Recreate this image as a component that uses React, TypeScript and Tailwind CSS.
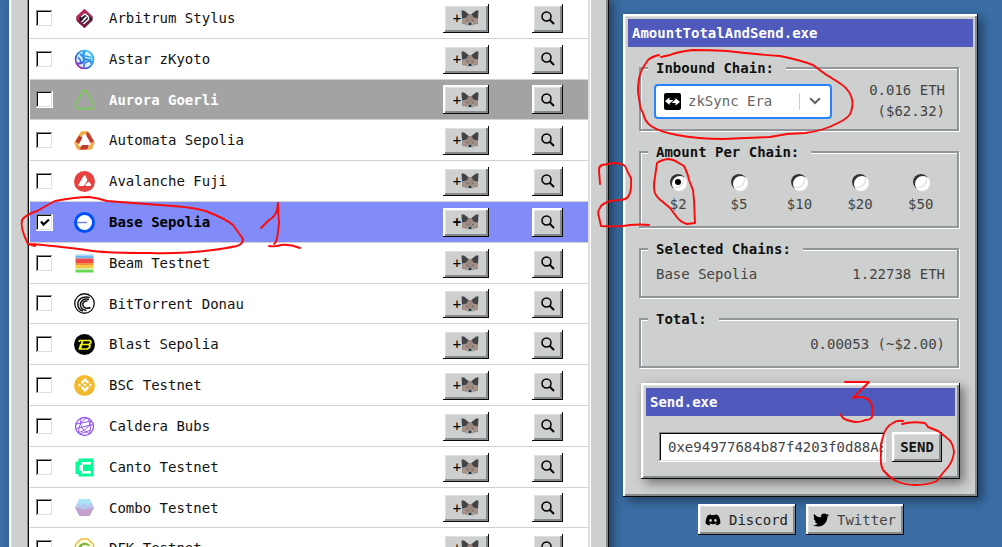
import { FC, ReactNode, useState } from "react";
import { FaDiscord, FaTwitter } from "react-icons/fa";
import { SiBinance } from "react-icons/si";

interface Chain {
  id: string;
  name: string;
  icon: ReactNode;
  hovered?: boolean;
}

const ChainIcon: FC<{ children: ReactNode }> = ({ children }) => (
  <svg viewBox="0 0 42 42" className="block size-[21px]" aria-hidden="true">
    {children}
  </svg>
);

const chains: Chain[] = [
  {
    id: "arbitrum-stylus",
    name: "Arbitrum Stylus",
    icon: (
      <ChainIcon>
        <path d="M21 2 37 17v8L21 40 5 25v-8z" fill="#2b1a30" />
        <path d="M21 2 37 17v4L22 9 11 18v9l-6-3v-7z" fill="#c2255a" />
        <path d="M21 40 6 27l5-2 10 8 13-11v5z" fill="#7d1b42" />
        <path d="M14 18 22 12l5 4-8 7M19 32l10-9v-6M15 28l9-8" fill="none" stroke="#fff" strokeWidth="3" />
      </ChainIcon>
    ),
  },
  {
    id: "astar-zkyoto",
    name: "Astar zKyoto",
    icon: (
      <ChainIcon>
        <defs>
          <linearGradient id="astar" gradientUnits="userSpaceOnUse" x1="6" y1="38" x2="36" y2="6">
            <stop offset="0" stopColor="#d6118f" />
            <stop offset="0.35" stopColor="#2f6fe0" />
            <stop offset="1" stopColor="#1fc3f5" />
          </linearGradient>
        </defs>
        <circle cx="21" cy="21" r="18" fill="#d9efff" stroke="url(#astar)" strokeWidth="3.4" />
        <g fill="none" stroke="url(#astar)" strokeWidth="4.6">
          <path d="M22 4c-5 6-5 11-1 17M21 21c5-1 11 1 15 8M21 21c-2 6-8 9-15 8" />
          <path d="M12 9c2 5 6 6 9 5 5-1 8 2 14 3M8 17c4 2 6 7 5 13M35 20c-5 3-7 6-12 7-3 2-4 5-3 11" strokeWidth="3" />
        </g>
      </ChainIcon>
    ),
  },
  {
    id: "aurora-goerli",
    name: "Aurora Goerli",
    hovered: true,
    icon: (
      <ChainIcon>
        <path
          d="M17 5q4-4 8 0l14 27q2 6-4 7H7q-6-1-4-7z"
          fill="none"
          stroke="#70d44b"
          strokeWidth="3"
          strokeLinejoin="round"
        />
      </ChainIcon>
    ),
  },
  {
    id: "automata-sepolia",
    name: "Automata Sepolia",
    icon: (
      <ChainIcon>
        <path
          d="M16 5h11l12 21-5 11H8L3 26z"
          fill="none"
          stroke="#f2ac45"
          strokeWidth="7"
          strokeLinejoin="round"
          transform="translate(1 1) scale(0.95)"
        />
        <path d="m10 11-7 12 7 5 7-13zM25 4l5 2 10 17-7 3-8-14zM16 30h14l-4 9H11z" fill="#c23b30" />
        <path d="M21 13 31 30H11z" fill="#fff" />
      </ChainIcon>
    ),
  },
  {
    id: "avalanche-fuji",
    name: "Avalanche Fuji",
    icon: (
      <ChainIcon>
        <circle cx="21" cy="21" r="21" fill="#e84142" />
        <path
          d="M19 10q2-3 4 0l3 6q1 2 0 4l-5 8q-1 2-3 2h-7q-3 0-2-3zM27 23q2-3 4 0l3 4q1 3-2 3h-7q-3 0-2-3z"
          fill="#fff"
        />
      </ChainIcon>
    ),
  },
  {
    id: "base-sepolia",
    name: "Base Sepolia",
    icon: (
      <ChainIcon>
        <circle cx="21" cy="21" r="18" fill="#fff" stroke="#0052ff" strokeWidth="6" />
        <path d="M6 21h20" stroke="#7c86ea" strokeWidth="3" />
      </ChainIcon>
    ),
  },
  {
    id: "beam-testnet",
    name: "Beam Testnet",
    icon: (
      <ChainIcon>
        <path d="M3 2h36v3H3z" fill="#c9e7fb" />
        <path d="M3 5h36v6H3z" fill="#72b7ee" />
        <path d="M3 11h36v9H3z" fill="#ef4a4a" />
        <path d="M3 20h36v4H3z" fill="#f6923c" />
        <path d="M3 24h36v7H3z" fill="#f8c945" />
        <path d="M3 31h36v3H3z" fill="#c3efaf" />
        <path d="M3 34h36v5H3z" fill="#6bd654" />
      </ChainIcon>
    ),
  },
  {
    id: "bittorrent-donau",
    name: "BitTorrent Donau",
    icon: (
      <ChainIcon>
        <circle cx="21" cy="21" r="19.5" fill="#fff" stroke="#111" strokeWidth="2.6" />
        <g fill="none" stroke="#111" strokeWidth="3">
          <path d="M31 9C16 5 6 14 8 25c1 6 5 10 10 11" />
          <path d="M30 13c-9-3-18 2-17 12 1 6 6 9 12 10" />
          <path d="M27 16c-6-1-11 3-9 9 2 6 9 7 15 4" />
        </g>
      </ChainIcon>
    ),
  },
  {
    id: "blast-sepolia",
    name: "Blast Sepolia",
    icon: (
      <ChainIcon>
        <circle cx="21" cy="21" r="21" fill="#050505" />
        <path
          d="M9 15l3-2h20l2 3-1 3-4 2 3 2-1 4-4 3H11l3-10M14 21h14M17 14l-4 15"
          fill="none"
          stroke="#f1f51b"
          strokeWidth="3.4"
        />
      </ChainIcon>
    ),
  },
  {
    id: "bsc-testnet",
    name: "BSC Testnet",
    icon: (
      <span className="flex size-[21px] items-center justify-center rounded-full bg-[#f3ba2f]">
        <SiBinance className="size-[14px] text-white" />
      </span>
    ),
  },
  {
    id: "caldera-bubs",
    name: "Caldera Bubs",
    icon: (
      <ChainIcon>
        <g fill="none" stroke="#9255f0" strokeWidth="2">
          <circle cx="21" cy="21" r="18" strokeWidth="2.6" />
          <path d="M4 16 35 10M14 4C10 18 18 32 31 35M34 9C31 22 21 31 8 33M27 4C16 7 9 18 9 33M5 25l33-8M27 4c6 10 8 20 4 31M12 36l22-8" />
        </g>
      </ChainIcon>
    ),
  },
  {
    id: "canto-testnet",
    name: "Canto Testnet",
    icon: (
      <ChainIcon>
        <path
          fillRule="evenodd"
          fill="#06fc99"
          d="M9 3h30v36H9v-5H3V9h6zM15 10v6h-5v11h5v6h19v-5H18V15h16v-5z"
        />
      </ChainIcon>
    ),
  },
  {
    id: "combo-testnet",
    name: "Combo Testnet",
    icon: (
      <ChainIcon>
        <path d="M11 4h20l9 17-9 17H11L2 21z" fill="#b9c5ea" />
        <path d="M11 4h20l4 9-14 8L6 13z" fill="#a9e4f8" />
        <path d="m2 21 19 4 19-4-9 17H11z" fill="#c4a1cf" />
        <path d="m12 20 9-9 10 9-10 6z" fill="#b4c8ef" />
      </ChainIcon>
    ),
  },
  {
    id: "dfk-testnet",
    name: "DFK Testnet",
    icon: (
      <ChainIcon>
        <path d="M14 2h14l11 11v16L28 40H14L3 29V13z" fill="#fffbe8" stroke="#efbd3e" strokeWidth="3" />
        <path d="M9 17C15 8 26 7 33 16l-7-1c-6-4-11 0-11 5l8-1v6H9z" fill="#76b82e" />
      </ChainIcon>
    ),
  },
];

const amounts = ["$2", "$5", "$10", "$20", "$50"];

const raised =
  "bg-[#cdd0cf] shadow-[inset_-1px_-1px_0_#0a0a0a,inset_2px_2px_0_#fff,inset_-3px_-3px_0_#868a8e,inset_3px_3px_0_#dfe0e3]";

const raisedWindow =
  "bg-[#cdd0cf] shadow-[inset_-1px_-1px_0_#0a0a0a,inset_2px_2px_0_#fff,inset_-3px_-3px_0_#868a8e,inset_3px_3px_0_#dfe0e3,4px_4px_10px_rgba(0,0,0,0.45)]";

const sunken =
  "bg-white shadow-[inset_-1px_-1px_0_#fff,inset_1px_1px_0_#868a8e,inset_-2px_-2px_0_#dfdfdf,inset_2px_2px_0_#0a0a0a]";

const FoxIcon: FC = () => (
  <svg viewBox="0 0 36 32" className="h-4 w-[18px]" aria-hidden="true">
    <path d="M2 2 13 8h10L34 2v26l-8 1-3 2H13l-3-2-8-1z" fill="#9b8a82" />
    <path d="m1 1 5 0 9 7-4 7-9 2zM35 1h-5l-9 7 4 7 9 2z" fill="#414347" />
    <path d="m3 18 9-2 3 6-5 4-7 1zM33 18l-9-2-3 6 5 4 7 1z" fill="#a6938b" />
    <path d="m9 19 5 1-1 3zM27 19l-5 1 1 3z" fill="#6a5f5a" />
    <path d="M12 26h12l-2 5h-8z" fill="#b8cbd6" />
    <path d="M15 26h6v4h-6z" fill="#22303a" />
  </svg>
);

const SearchIcon: FC = () => (
  <svg viewBox="0 0 28 28" className="size-[14px]" fill="none" stroke="#000" strokeWidth="3" aria-hidden="true">
    <circle cx="11" cy="11" r="9" />
    <path d="m17 17 9 9" strokeWidth="4" />
  </svg>
);

const TitleBar: FC<{ title: string }> = ({ title }) => (
  <h2 className="bg-[#505abc] px-1 py-1 text-[14px] leading-5 font-bold text-white">{title}</h2>
);

// The white edge is a shadow, so the legend carries the panel colour to break it.
const Group: FC<{ label: string; children: ReactNode }> = ({ label, children }) => (
  <fieldset className="min-w-0 border-2 border-[#92959a] pr-[6px] pl-[7px] shadow-[1px_1px_0_#fff,inset_1px_1px_0_#fff]">
    <legend className="bg-[#cdd0cf] pr-3 pl-2 leading-5 font-bold text-[#111]">{label}</legend>
    {children}
  </fieldset>
);

const ChainRow: FC<{ chain: Chain; checked: boolean; onToggle: () => void }> = ({
  chain,
  checked,
  onToggle,
}) => {
  const tone = checked
    ? "bg-[#828cf8] font-bold text-black"
    : chain.hovered
      ? "bg-[#a3a3a3] text-white"
      : "bg-white text-[#111]";
  return (
    <tr className={`h-[41px] nth-[5n+3]:h-10 [&>td]:border-b [&>td]:border-[#d2d2d2] [&>td]:p-0 ${tone}`}>
      <td>
        <span className="ml-[6px] grid size-[17px] place-items-center">
          <input
            id={chain.id}
            type="checkbox"
            checked={checked}
            onChange={onToggle}
            className="peer col-start-1 row-start-1 size-[17px] appearance-none bg-white shadow-[inset_-1px_-1px_0_#fff,inset_1px_1px_0_#868a8e,inset_-2px_-2px_0_#dfdfdf,inset_2px_2px_0_#0a0a0a]"
          />
          <svg
            viewBox="0 0 20 16"
            className="pointer-events-none col-start-1 row-start-1 hidden h-2 w-[10px] peer-checked:block"
            aria-hidden="true"
          >
            <path d="m2 7 5 6L18 3" fill="none" stroke="#000" strokeWidth="4.5" />
          </svg>
        </span>
      </td>
      <td>{chain.icon}</td>
      <td>
        <label htmlFor={chain.id} className={`leading-5 ${chain.hovered ? "font-bold" : ""}`}>
          {chain.name}
        </label>
      </td>
      <td>
        <button
          type="button"
          aria-label={`Add ${chain.name} to wallet`}
          className={`flex h-[29px] w-[46px] items-center justify-center text-black ${raised}`}
        >
          <span>+</span>
          <FoxIcon />
        </button>
      </td>
      <td>
        <button
          type="button"
          aria-label={`Explore ${chain.name}`}
          className={`flex h-[29px] w-[31px] items-center justify-center ${raised}`}
        >
          <SearchIcon />
        </button>
      </td>
    </tr>
  );
};

const ChainTable: FC = () => {
  const [selected, setSelected] = useState(["base-sepolia"]);
  const toggle = (id: string) =>
    setSelected((ids) => (ids.includes(id) ? ids.filter((i) => i !== id) : [...ids, id]));
  return (
    <section className={`-mt-1 min-w-0 flex-1 pt-1 pr-[19px] pl-[18px] ${raisedWindow}`}>
      <div className="border-r-2 border-l border-r-[#dfdfdf] border-l-[#868a8e] bg-white pl-[2px] shadow-[inset_1px_0_0_#0a0a0a,1px_0_0_#fff]">
        <table className="-mt-0.5 w-full table-fixed border-separate border-spacing-0">
          <colgroup>
            <col className="w-[44px]" />
            <col className="w-[35px]" />
            <col />
            <col className="w-[89px]" />
            <col className="w-[56px]" />
          </colgroup>
          <tbody>
            {chains.map((chain) => (
              <ChainRow
                key={chain.id}
                chain={chain}
                checked={selected.includes(chain.id)}
                onToggle={() => toggle(chain.id)}
              />
            ))}
          </tbody>
        </table>
      </div>
    </section>
  );
};

const InboundSelect: FC = () => (
  <div className="flex h-[35px] w-[178px] items-center rounded border-2 border-[#2684ff] bg-white pr-2 pl-2">
    <svg viewBox="0 0 34 34" className="size-[17px] shrink-0" aria-hidden="true">
      <rect width="34" height="34" rx="4" fill="#000" />
      <path d="m2 16 9-7v5h8l-8 7v3zM32 18l-9-8v3l-8 7h8v5z" fill="#fff" />
    </svg>
    <select
      aria-label="Inbound chain"
      className="ml-[7px] min-w-0 flex-1 appearance-none bg-transparent leading-5 text-[#666] outline-none"
    >
      <option>zkSync Era</option>
    </select>
    <span className="h-[17px] w-px bg-[#ccc]" />
    <svg viewBox="0 0 20 20" className="ml-2 size-[14px] shrink-0" aria-hidden="true">
      <path d="m3 6 7 7 7-7" fill="none" stroke="#666" strokeWidth="3" />
    </svg>
  </div>
);

const AmountRadios: FC = () => {
  const [amount, setAmount] = useState(amounts[0]);
  return (
    <div className="grid grid-cols-5 py-3">
      {amounts.map((value) => (
        <label key={value} className="flex flex-col items-center gap-1 leading-5">
          <span className="grid place-items-center">
            <input
              type="radio"
              name="amount"
              value={value}
              checked={amount === value}
              onChange={() => setAmount(value)}
              className="peer col-start-1 row-start-1 size-4 appearance-none rounded-full bg-white shadow-[inset_2px_2px_0_#333,inset_-2px_-2px_0_#fff,inset_-3px_-3px_0_#dfdfdf,1px_1px_0_#fff]"
            />
            <span className="pointer-events-none col-start-1 row-start-1 hidden size-[6px] rounded-full bg-black peer-checked:block" />
          </span>
          {value}
        </label>
      ))}
    </div>
  );
};

const SendWindow: FC = () => {
  const [address, setAddress] = useState("0xe94977684b87f4203f0d88A8");
  return (
    <section className={`mt-[15px] ml-[2px] p-[5px] ${raisedWindow}`}>
      <TitleBar title="Send.exe" />
      <form className="flex gap-[6px] px-[13px] pt-4 pb-3" onSubmit={(e) => e.preventDefault()}>
        <input
          type="text"
          aria-label="Recipient address"
          value={address}
          onChange={(e) => setAddress(e.target.value)}
          className={`h-[30px] min-w-0 flex-1 pr-[3px] pl-[9px] outline-none ${sunken}`}
        />
        <button type="submit" className={`h-[30px] w-[50px] font-bold text-[#111] ${raised}`}>
          SEND
        </button>
      </form>
    </section>
  );
};

const Annotations: FC = () => (
  <svg
    viewBox="0 0 1002 547"
    className="pointer-events-none absolute top-0 left-0 h-[547px] w-[1002px]"
    fill="none"
    stroke="#fa0a0a"
    strokeWidth="1.9"
    strokeLinecap="round"
    strokeLinejoin="round"
    aria-hidden="true"
  >
    <path d="M35 246 28 244Q20 228 22 220 25 215 37 211L55 201Q76 197 89 197 98 198 107 201L133 203 173 206Q198 208 208 212 226 219 233 225L243 239Q243 244 237 246 222 249 213 250 180 254 150 253 108 253 93 251 50 245 28 244" />
    <path d="M261 228 269 220Q275 217 277 210L278 203Q278 212 279 223 278 234 277 238 276 243 274 244M269 246Q275 247 281 245 290 244 300 248" />
    <path d="M659 55Q651 57 648 60 640 71 639 79 637 91 639 98 640 109 643 113 645 122 651 126 660 132 677 135 698 139 723 139L770 137 787 134 805 133Q823 131 838 123 849 118 851 112 854 103 851 96 848 88 838 82 824 74 813 65 800 60 780 56 752 54 727 51 706 50 693 50 677 52 670 55L661 57" />
    <path d="M600 184 599 170Q599 166 602 165 608 164 613 163 621 163 625 166 628 173 631 178 632 192 628 197 625 200 620 200L610 201Q601 204 600 208 597 212 599 217L601 226Q621 227 630 225 640 224 649 225" />
    <path d="M694 200 695 223 687 224Q680 222 676 216L670 208 663 202Q657 198 655 193 653 187 655 177L657 163Q661 160 668 159 675 160 677 162L684 166Q688 174 689 180L693 190 694 200" />
    <path d="M845 382H869L853 398Q861 396 865 398 871 400 872 406 873 411 872 417 870 420 865 420 862 422 855 422 845 420 843 418L840 414" />
    <path d="M903 421Q896 420 893 423 885 427 883 437 880 445 881 455 880 464 883 470 890 478 896 481 905 485 915 485 928 485 937 481L942 474 948 467Q953 461 954 452 953 442 947 438L938 431 928 427 925 423Q912 421 902 424" />
  </svg>
);

const App: FC = () => (
  <main className="relative h-screen overflow-hidden bg-[#3a6ea5] font-['DejaVu_Sans_Mono','Liberation_Mono',monospace] text-[14px] leading-5 text-[#444]">
    <div className="flex gap-[14px] pr-6 pl-[9px]">
      <ChainTable />
      <aside className="w-[355px] shrink-0 pt-[14px]">
        <section className={`p-[5px] ${raisedWindow}`}>
          <TitleBar title="AmountTotalAndSend.exe" />
          <div className="flex flex-col gap-[11px] pt-[11px] pr-[14px] pl-[11px]">
            <Group label="Inbound Chain:">
              <div className="flex items-center justify-between pt-[2px] pr-[6px] pb-[7px] pl-[6px]">
                <InboundSelect />
                <p className="text-right leading-[21px]">
                  0.016 ETH
                  <br />
                  ($62.32)
                </p>
              </div>
            </Group>
            <Group label="Amount Per Chain:">
              <AmountRadios />
            </Group>
            <Group label="Selected Chains:">
              <div className="flex justify-between pt-[5px] pr-[6px] pb-3 pl-2">
                <span>Base Sepolia</span>
                <span>1.22738 ETH</span>
              </div>
            </Group>
            <Group label="Total:">
              <p className="pt-[5px] pr-[6px] pb-3 text-right">0.00053 (~$2.00)</p>
            </Group>
          </div>
          <div className="pr-[13px] pb-[13px] pl-[11px]">
            <SendWindow />
          </div>
        </section>
        <nav className="mt-[7px] flex justify-center gap-[10px]">
          <a
            href="#discord"
            className={`flex h-[31px] w-[98px] items-center justify-center gap-2 text-[#222] ${raised}`}
          >
            <FaDiscord className="size-4 text-black" />
            Discord
          </a>
          <a href="#twitter" className={`flex h-[31px] w-[98px] items-center justify-center gap-2 ${raised}`}>
            <FaTwitter className="size-4 text-black" />
            Twitter
          </a>
        </nav>
      </aside>
    </div>
    <Annotations />
  </main>
);

export default App;
